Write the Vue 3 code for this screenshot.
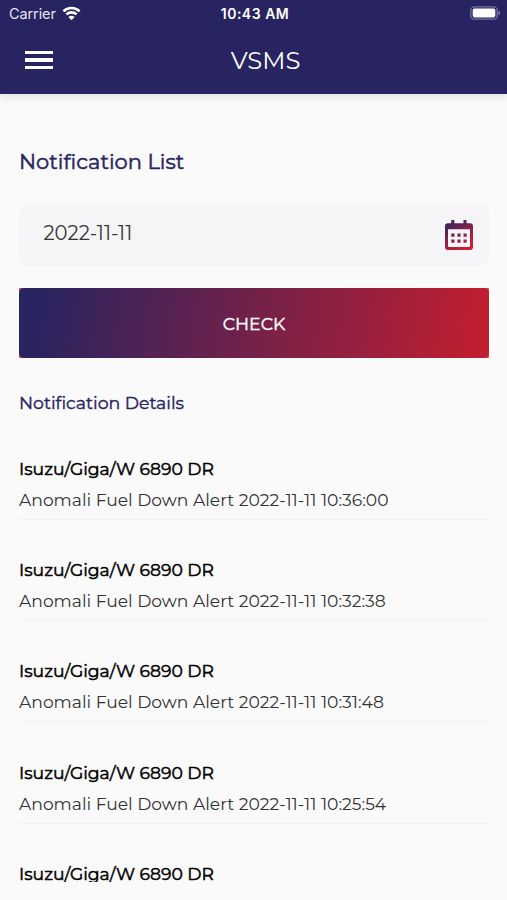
<template>
  <div class="screen">
    <header class="header">
      <div class="status">
        <div class="carrier">
          <span>Carrier</span>
          <svg class="wifi" viewBox="0 0 20 15" fill="none">
            <path d="M1.5 5.2a12 12 0 0 1 17 0M4.6 8.5a7.7 7.7 0 0 1 10.8 0" stroke="#fff" stroke-width="2.7" />
            <path d="M10 14.5 6.7 11.1a4.7 4.7 0 0 1 6.6 0z" fill="#fff" />
          </svg>
        </div>
        <span class="clock">10:43 AM</span>
        <svg class="battery" viewBox="0 0 31 14">
          <rect x="0.8" y="0.8" width="26.4" height="12.4" rx="3.6" fill="none" stroke="#7773a3" stroke-width="1.3" />
          <rect x="2.7" y="2.6" width="22.6" height="8.8" rx="1.8" fill="#fff" />
          <path d="M28.4 4.7v4.6q1.8-.6 1.8-2.3t-1.8-2.3z" fill="#7773a3" />
        </svg>
      </div>
      <div class="navbar">
        <button class="menu" aria-label="Menu">
          <span></span>
          <span></span>
          <span></span>
        </button>
        <h1>VSMS</h1>
      </div>
    </header>

    <main class="content">
      <h2>Notification List</h2>

      <div class="date-field">
        <span class="date">{{ date }}</span>
        <svg class="calendar" viewBox="0 0 28 30">
          <defs>
            <linearGradient id="cal" x1="0" y1="0" x2="0.55" y2="1">
              <stop offset="0.1" stop-color="#33235f" />
              <stop offset="0.55" stop-color="#85204b" />
              <stop offset="1" stop-color="#cc1c32" />
            </linearGradient>
          </defs>
          <path
            fill="url(#cal)"
            fill-rule="evenodd"
            d="M6.3 0h3v3.2h9.2V0h3v3.2H25a3 3 0 0 1 3 3V27a3 3 0 0 1-3 3H3a3 3 0 0 1-3-3V6.2a3 3 0 0 1 3-3h3.3zM3 9.3V26a1 1 0 0 0 1 1h20a1 1 0 0 0 1-1V9.3zM6.3 13.5h3.2v3.2H6.3zM12.4 13.5h3.2v3.2h-3.2zM18.5 13.5h3.2v3.2h-3.2zM6.3 19.6h3.2v3.2H6.3zM12.4 19.6h3.2v3.2h-3.2zM18.5 19.6h3.2v3.2h-3.2z"
          />
        </svg>
      </div>

      <div class="check-wrap">
        <button class="check">CHECK</button>
      </div>

      <h3>Notification Details</h3>

      <div class="list">
        <div v-for="(item, i) in items" :key="i" class="item">
          <p class="vehicle">{{ item.vehicle }}</p>
          <p v-if="item.time" class="alert">{{ item.message }} {{ date }} {{ item.time }}</p>
        </div>
      </div>
    </main>
  </div>
</template>

<script setup>
import { ref } from 'vue'

const date = ref('2022-11-11')

const times = ['10:36:00', '10:32:38', '10:31:48', '10:25:54', '']

const items = ref(
  times.map((time) => ({
    vehicle: 'Isuzu/Giga/W 6890 DR',
    message: 'Anomali Fuel Down Alert',
    time
  }))
)
</script>

<style>
body {
  background: #fafafa;
}
</style>

<style scoped>
.screen {
  height: 900px;
  display: flex;
  flex-direction: column;
  overflow: hidden;
  background: #fafafa;
  font-family: Montserrat, Inter, sans-serif;
  font-variant-ligatures: none;
}

h1, h2, h3, p {
  margin: 0;
  white-space: nowrap;
}

button {
  border: 0;
  padding: 0;
  font-family: inherit;
}

.header {
  flex: none;
  height: 94px;
  background: #272461;
  color: #fff;
  box-shadow: 0 2px 9px rgba(0, 0, 0, 0.12);
}

.status {
  height: 27px;
  padding: 0 6px 0 9px;
  display: grid;
  grid-template-columns: 1fr auto 1fr;
  align-items: center;
  font-family: Inter, sans-serif;
}

.carrier {
  display: flex;
  align-items: center;
  gap: 6px;
  font-size: 14.5px;
  letter-spacing: -0.1px;
  color: #e4e3ee;
}

.wifi {
  width: 19px;
  height: 15px;
  margin-bottom: 1px;
}

.clock {
  font-size: 14px;
  font-weight: 600;
  letter-spacing: 0.5px;
}

.battery {
  justify-self: end;
  width: 31px;
  height: 14px;
  margin-bottom: 1px;
}

.navbar {
  height: 66px;
  display: grid;
  grid-template-columns: 80px 1fr 80px;
  align-items: center;
}

.menu {
  width: 28px;
  margin-left: 25px;
  display: flex;
  flex-direction: column;
  gap: 4px;
  background: none;
}

.menu span {
  height: 3.6px;
  background: #fff;
}

h1 {
  text-align: center;
  padding-left: 24px;
  padding-bottom: 1px;
  font-size: 24.3px;
  font-weight: 400;
}

.content {
  flex: 1;
  min-height: 0;
  margin-bottom: 18px;
  padding: 54px 18px 0 19px;
  overflow: hidden;
}

h2 {
  color: #272461;
  font-size: 21px;
  font-weight: 400;
  line-height: 28px;
  -webkit-text-stroke: 0.5px currentColor;
}

.date-field {
  height: 61px;
  margin-top: 29px;
  padding: 0 16px 0 24.5px;
  display: flex;
  justify-content: space-between;
  align-items: center;
  box-sizing: border-box;
  border-radius: 8px;
  background: #f5f5f8;
}

.date {
  padding-bottom: 5px;
  font-size: 19.6px;
  color: #333;
}

.calendar {
  width: 28px;
  height: 30px;
  margin-bottom: 2px;
}

.check-wrap {
  height: 70px;
  margin-top: 22px;
  background: #e8413d;
  border-radius: 1px;
}

.check {
  display: block;
  width: 100%;
  height: 100%;
  border-radius: 5px;
  background: linear-gradient(100deg, #272461 3%, #c01e31 97%);
  color: #fff;
  font-size: 17.3px;
  font-weight: 400;
  -webkit-text-stroke: 0.4px currentColor;
}

h3 {
  margin-top: 33px;
  color: #272461;
  font-size: 17.3px;
  font-weight: 400;
  line-height: 24px;
  -webkit-text-stroke: 0.4px currentColor;
}

.item {
  height: 101.4px;
  padding-top: 37.5px;
  box-sizing: border-box;
  border-bottom: 1px solid #f0f0f2;
}

.item:first-child {
  height: 104.5px;
  padding-top: 41px;
}

.vehicle {
  color: #000;
  font-size: 17.2px;
  font-weight: 400;
  line-height: 26px;
  -webkit-text-stroke: 0.5px currentColor;
}

.alert {
  padding-top: 4.8px;
  color: #333;
  font-size: 17.15px;
  line-height: 26px;
}
</style>
